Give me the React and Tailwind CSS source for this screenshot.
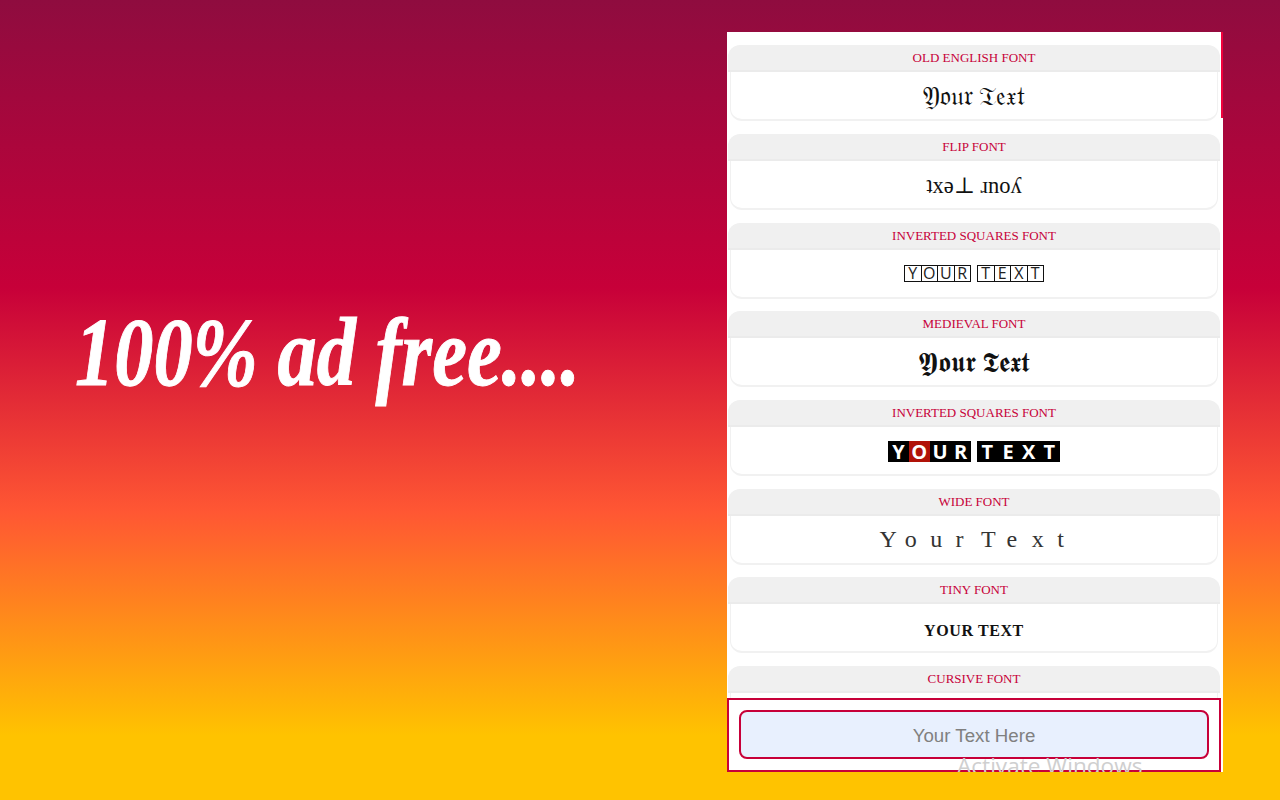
import React from 'react';

const Squares = ({ dark }) => {
  const words = ['YOUR', 'TEXT'];
  return (
    <div className="flex items-center justify-center gap-[6px] font-['Open_Sans',sans-serif]">
      {words.map((word) => (
        <div key={word} className={dark ? 'flex mt-[3px]' : 'flex border-l-[1.5px] border-[#111]'}>
          {word.split('').map((ch, i) => (
            <span
              key={i}
              className={
                dark
                  ? `w-[20.7px] h-[21px] flex items-center justify-center text-[20px] leading-none font-bold text-white ${word === 'YOUR' && i === 1 ? 'bg-[#b01208]' : 'bg-black'}`
                  : 'w-[16.5px] h-[17px] flex items-center justify-center text-[16px] leading-none text-[#222] border-[1.5px] border-l-0 border-[#111]'
              }
            >
              {ch}
            </span>
          ))}
        </div>
      ))}
    </div>
  );
};

const Wide = () => (
  <div className="flex -mt-[1px] pl-[14px] text-[24px] text-[#333]">
    {'YourText'.split('').map((ch, i) => (
      <span key={i} className="w-[25.4px] text-left">
        {ch}
      </span>
    ))}
  </div>
);

const fonts = [
  { title: 'OLD ENGLISH FONT', body: <span className="mt-[3px] text-[25.5px] text-[#111]">𝔜𝔬𝔲𝔯 𝔗𝔢𝔵𝔱</span> },
  { title: 'FLIP FONT', body: <span className="mt-[2px] text-[22.5px] text-[#111]">ʇxǝ⊥ ɹnoʎ</span> },
  { title: 'INVERTED SQUARES FONT', body: <Squares /> },
  { title: 'MEDIEVAL FONT', body: <span className="mt-[2px] text-[27.5px] text-[#111]">𝖄𝖔𝖚𝖗 𝕿𝖊𝖝𝖙</span> },
  { title: 'INVERTED SQUARES FONT', body: <Squares dark /> },
  { title: 'WIDE FONT', body: <Wide /> },
  { title: 'TINY FONT', body: <span className="mt-[7px] text-[16px] font-bold text-[#111] tracking-[0.6px]">YOUR TEXT</span> },
  { title: 'CURSIVE FONT', body: null },
];

const App = () => {
  return (
    <div className="w-[1280px] h-[800px] overflow-hidden flex bg-[linear-gradient(180deg,#8f0c3f_0%,#c70039_36%,#ff5733_64%,#ffc300_92%,#ffc300_100%)] font-['Liberation_Serif','DejaVu_Serif',serif]">
      <div className="w-[727px] pl-[75px] pt-[302px]">
        <h1 className="text-[98px] leading-[100px] font-bold italic text-white whitespace-nowrap origin-left scale-x-[0.8] [-webkit-text-stroke:1px_white]">
          100% ad free....
        </h1>
      </div>

      <div className="relative w-[496px] h-[740px] mt-[32px] bg-white overflow-hidden">
        {/* Scrollbar thumb */}
        <div className="absolute top-0 right-0 w-[2px] h-[86px] bg-[#f0003c]" />

        <div className="flex flex-col gap-[12.65px] pt-[13.4px] pl-px pr-[3px]">
          {fonts.map(({ title, body }, i) => (
            <div key={i} className="h-[76px] shrink-0">
              <div className="h-[27px] rounded-t-[12px] bg-[#f0f0f0] border-b-2 border-[#ebebeb] text-center text-[13px] leading-[26px] text-[#c70039]">
                {title}
              </div>
              <div className="h-[49px] mx-[2px] rounded-b-[12px] border-b-2 border-x border-[#f1f1f1] flex items-center justify-center whitespace-pre">
                {body}
              </div>
            </div>
          ))}
        </div>

        {/* Input stuck to the bottom of the popup */}
        <div className="absolute left-0 right-[2px] bottom-0 h-[74px] bg-white border-2 border-[#c70039] px-[10px] pt-[10px]">
          <div className="h-[49px] pt-[3px] rounded-[8px] border-[2.5px] border-[#c70039] bg-[#e8f0fe] flex items-center justify-center font-['Liberation_Sans',sans-serif] text-[18.7px] text-[#808080]">
            Your Text Here
          </div>
        </div>

        {/* OS watermark */}
        <div className="absolute left-[230px] top-[722px] font-['Open_Sans',sans-serif] text-[22.6px] leading-[24px] text-[#cfcfcf] whitespace-nowrap">
          Activate Windows
        </div>
      </div>
    </div>
  );
};

export default App;
